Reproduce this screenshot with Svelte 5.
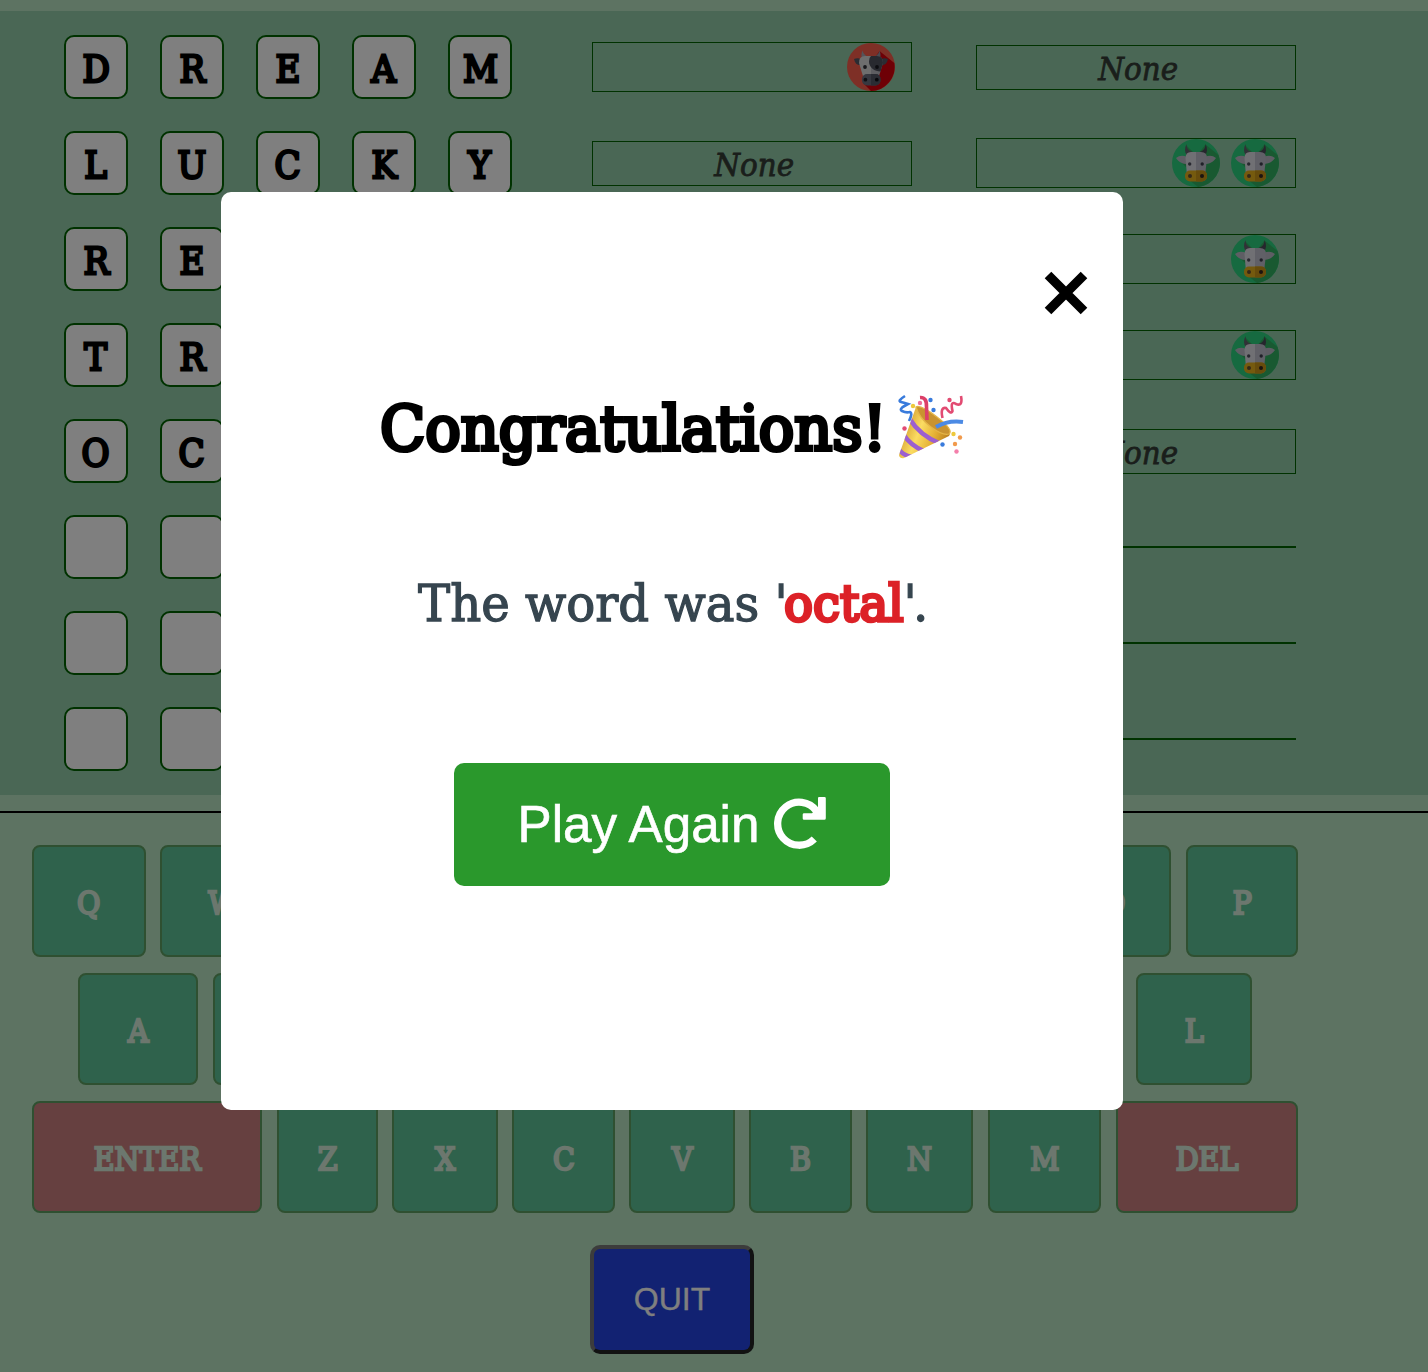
<script>
  const guesses = [
    { word: 'DREAM', bulls: 1, cows: 0 },
    { word: 'LUCKY', bulls: 0, cows: 2 },
    { word: 'RELAX', bulls: 1, cows: 1 },
    { word: 'TRAIL', bulls: 1, cows: 1 },
    { word: 'OCTAL', bulls: 5, cows: 0 },
    { word: '     ' },
    { word: '     ' },
    { word: '     ' }
  ];
  // A key without a width shares the space left over in its row.
  const key = (label, width, gap = 14.5) => ({ label, width, gap });
  const rows = [
    [key('Q', 114, 14), key('W', 125), ...[...'ERTYUI'].map((c) => key(c)), key('O', 114, 15), key('P', 112, 0)],
    [key('A', 120, 15), ...[...'SDFGHJK'].map((c) => key(c)), key('L', 116, 0)],
    [key('ENTER', 230, 15), key('Z', 101, 14), key('X', 106, 14), key('C', 103, 14), key('V', 106, 14),
     key('B', 103, 14), key('N', 107, 15), key('M', 113, 15), key('DEL', 182, 0)]
  ];
  const confetti = [
    [33, 26, '#eec93c'], [40, 23, '#ee6f9c'], [50.5, 20, '#397bdc'], [53.5, 30, '#397bdc'],
    [69.5, 20, '#e24b72'], [24.5, 48.5, '#e24b72'], [73.5, 54, '#eec93c'], [80, 57.5, '#f19a4c'],
    [75, 64, '#f19a4c'], [62.5, 64.5, '#397bdc'], [76.5, 71.5, '#f47fab']
  ];
</script>

{#snippet bull()}
  <svg class="animal" viewBox="0 0 48 48">
    <circle cx="24" cy="24" r="24" fill="#fc5e4c" />
    <path d="M32.500 8L47.300 20A24 24 0 0 1 24 48L16 40l8-20z" fill="#dc000c" />
    <path d="M15.500 7.500c-2 5-1 9 2 10l6-3c-4-1-7-3-8-7z" fill="#a8a8b4" />
    <path d="M32.500 7.500c2 5 1 9-2 10l-6-3c4-1 7-3 8-7z" fill="#9494a2" />
    <path d="M7 16c1 5 4 7 8 6v-5c-3-2-5-2-8-1zM41 16c-1 5-4 7-8 6v-5c3-2 5-2 8-1z" fill="#565866" />
    <path d="M18 13h6v26h-6l-3-9-3-10q0-7 6-7z" fill="#dcdcdc" />
    <path d="M24 13h6q6 0 6 7l-3 10-3 9h-6z" fill="#bcbcc4" />
    <path d="M24 13h6q6 0 6 7l-2.500 8.500c-6 0-11.500-4-11.500-10q0-4 2-5.500z" fill="#50525f" />
    <rect x="15" y="31" width="18.500" height="11.500" rx="5" fill="#6c7080" />
    <path d="M24 31h4.500q5 0 5 5.500t-5 6H24z" fill="#545866" />
    <circle cx="18" cy="24" r="1.900" fill="#303038" /><circle cx="30" cy="24" r="1.900" fill="#181820" />
    <circle cx="18.400" cy="36.700" r="1.900" fill="#202028" /><circle cx="29.800" cy="36.700" r="1.900" fill="#101018" />
  </svg>
{/snippet}

{#snippet cow()}
  <svg class="animal" viewBox="0 0 48 48">
    <circle cx="24" cy="24" r="24" fill="#2cd480" />
    <path d="M33.500 5.500L46.500 16A24 24 0 0 1 26 48L14.500 39l10-22z" fill="#32b262" />
    <path d="M14 6l7 7-7 5zM5 19l9 9 5-8z" fill="#32b262" />
    <path d="M14.500 5c-2 4-2 8 0 11l6-3c-4-1-6-4-6-8z" fill="#62626e" />
    <path d="M33.500 5c2 4 2 8 0 11l-6-3c4-1 6-4 6-8z" fill="#4c4c5a" />
    <path d="M4 19q5-4 11-1l1 7c-6 0-9-2-12-6zM44 19q-5-4-11-1l-1 7c6 0 9-2 12-6z" fill="#bcbcc8" />
    <path d="M19 13h5v24h-9l-1.500-18q0-6 5.500-6z" fill="#e0e0e8" />
    <path d="M24 13h5q6 0 6 6l-2 18h-9z" fill="#c0c0ce" />
    <rect x="13" y="31.500" width="22" height="11" rx="5" fill="#eab41c" />
    <path d="M24 31.500h6q5 0 5 5t-5 6h-6z" fill="#ce9818" />
    <circle cx="17.700" cy="25" r="1.700" fill="#505060" /><circle cx="30.200" cy="25" r="1.700" fill="#404050" />
    <circle cx="18" cy="37" r="2" fill="#685030" /><circle cx="30" cy="37" r="2" fill="#382820" />
  </svg>
{/snippet}

{#snippet result(count, icon)}
  {#if count === undefined}
    <div class="result blank"></div>
  {:else if count === 0}
    <div class="result none"><span>None</span></div>
  {:else}
    <div class="result icons">
      {#each Array(count) as _}{@render icon()}{/each}
    </div>
  {/if}
{/snippet}

<main>
  <section class="board">
    {#each guesses as guess}
      <div class="guess">
        <div class="tiles">
          {#each guess.word as letter}
            <div class="tile"><span>{letter}</span></div>
          {/each}
        </div>
        {@render result(guess.bulls, bull)}
        {@render result(guess.cows, cow)}
      </div>
    {/each}
  </section>

  <section class="keyboard">
    {#each rows as row, i}
      <div class="keys" class:inset={i === 1}>
        {#each row as k}
          <button
            class="key"
            class:action={k.label.length > 1}
            style:flex={k.width ? `0 0 ${k.width}px` : '1 1 0'}
            style:margin-right={`${k.gap}px`}
          ><span>{k.label}</span></button>
        {/each}
      </div>
    {/each}
  </section>
  <button class="quit">QUIT</button>
</main>

<div class="overlay">
  <div class="modal">
    <button class="close" aria-label="Close">
      <svg viewBox="0 0 44 44"><path d="M4 4l36 36M40 4L4 40" stroke="#000" stroke-width="9.300" /></svg>
    </button>
    <h1>
      <span class="title">Congratulations!</span>
      <svg class="party" viewBox="18 14 66 66">
        <defs>
          <linearGradient id="gold" x1="0" y1="0.300" x2="1" y2="0.700">
            <stop offset="0" stop-color="#c98d20" /><stop offset=".4" stop-color="#fbdc62" />
            <stop offset=".7" stop-color="#e3ae33" /><stop offset="1" stop-color="#b07318" />
          </linearGradient>
          <clipPath id="cone"><path d="M36 27L19 75Q20 79 24 78L69 56Q73 50 58 39T36 27z" /></clipPath>
        </defs>
        <path d="M36 27L19 75Q20 79 24 78L69 56Q73 50 58 39T36 27z" fill="url(#gold)" />
        <g clip-path="url(#cone)" fill="none" stroke="#9c5fd0" stroke-width="4.500">
          <path d="M29 38Q40 56 61 64" /><path d="M23 54Q31 66 44 71" /><path d="M18 68Q22 75 32 77" />
        </g>
        <path d="M36 27Q40 24 57 37T69 54Q63 56 51 47T36 27z" fill="#c99330" stroke="#e4b548" stroke-width="1.300" />
        <path d="M40 17.500Q47 17 46.500 27L47 40" fill="none" stroke="#dc3f68" stroke-width="3.600" />
        <path d="M56 47Q68 40 83 42" fill="none" stroke="#4c8ae4" stroke-width="4" />
        <path d="M25 16Q17 21 21 22T28 24Q18 29 22 31T30 32Q33 33 29 41" fill="none" stroke="#397bdc" stroke-width="2.600" />
        <path d="M62.500 38Q60 27 66 28Q71 35 72.500 31Q70 20 76 24Q83 27 81 16" fill="none" stroke="#e24b72" stroke-width="2.600" />
        {#each confetti as [x, y, fill]}
          <circle cx={x} cy={y} r="2.200" {fill} />
        {/each}
      </svg>
    </h1>
    <p><span class="message">The word was <i>'</i><b>octal</b><i>'</i>.</span></p>
    <button class="again">
      Play Again
      <svg viewBox="0 0 52 52">
        <path d="M40.300 42A21.500 21.500 0 1 1 42.500 14" fill="none" stroke="#fff" stroke-width="7.300" />
        <path d="M45 0h5.500q1.300 0 1.300 1.300v20q0 1.500-1.500 1.500H30q-1.300 0-1.300-1.300v-4q0-1.300 1.300-1.300h8l6-6V1.300Q44 0 45 0z" fill="#fff" />
      </svg>
    </button>
  </div>
</div>

<style>
  :global(body) { margin: 0; background: #bae6c5; overflow: hidden; }
  main {
    box-sizing: border-box; height: 1372px; padding-top: 11px; overflow: hidden;
    font-family: 'Roboto Slab', 'DejaVu Serif', serif;
  }
  button { box-sizing: border-box; margin: 0; padding: 0; font-family: inherit; }
  .board {
    box-sizing: border-box; height: 784px; padding: 24px 64px;
    display: flex; flex-direction: column; gap: 32px; background: #94ceaa;
  }
  .guess { display: flex; align-items: center; height: 64px; }
  .tiles { display: flex; gap: 32px; margin-right: 16px; }
  .tile {
    box-sizing: border-box; width: 64px; height: 64px; border: 2px solid #006400; border-radius: 10px;
    background: #fff; display: flex; align-items: center; justify-content: center;
    font-size: 38px; line-height: 60px;
  }
  /* An outline thickens the serifs into slabs. */
  .tile span { transform: scaleX(.9); padding-top: 4px; -webkit-text-stroke: 2.800px #000; }
  .result {
    box-sizing: border-box; flex: 0 0 320px; margin-left: 64px; border: 1px solid #006400;
    display: flex; align-items: center;
  }
  .icons { height: 50px; justify-content: flex-end; gap: 11px; padding-right: 16px; }
  .none {
    height: 45px; margin-top: 1px; justify-content: center; font-style: italic; font-size: 32px;
    line-height: 43px; color: #343c36;
  }
  .none span { transform: scaleX(.92); padding: 4px 0 0 4px; -webkit-text-stroke: .8px #343c36; }
  .animal { width: 48px; height: 48px; flex: none; }
  .keyboard {
    margin-top: 16px; border-top: 2px solid #000; padding: 32px 130px 0 32px;
    display: flex; flex-direction: column; gap: 16px;
  }
  .keys { display: flex; height: 112px; }
  .keys.inset { padding: 0 46px; }
  .key {
    height: 112px; border: 2px solid #5ea062; border-radius: 8px; background: #5ec498; color: #d8eedc;
    font-size: 31px;
  }
  .key span { display: inline-block; transform: scaleX(.92); padding-top: 4px; -webkit-text-stroke: 2.400px #d8eedc; }
  .action { background: #cc8080; }
  .quit {
    display: block; width: 164px; height: 109px; margin: 32px 0 0 590px; border: 4px solid;
    border-color: #787878 #242424 #242424 #787878; border-radius: 10px; background: #2444e4; color: #fff;
    font: 32px 'Liberation Sans', sans-serif; padding-bottom: 1px; -webkit-text-stroke: .3px #fff;
  }
  .overlay {
    position: fixed; inset: 0; box-sizing: border-box; padding: 192px 305px 262px 221px;
    background: rgba(0, 0, 0, .5);
  }
  .modal {
    box-sizing: border-box; height: 918px; background: #fff; border-radius: 10px;
    display: flex; flex-direction: column; align-items: center;
    font-family: 'Roboto Slab', 'DejaVu Serif', serif;
  }
  .close { align-self: flex-end; width: 44px; height: 44px; margin: 79px 35px 0 0; border: 0; background: none; }
  .modal svg { display: block; }
  h1 { display: flex; gap: 12px; margin: 79px 0 0; height: 80px; font-weight: 400; }
  .title {
    width: 506px; font-size: 62px; line-height: 70px; white-space: nowrap;
    transform: scaleX(.953); transform-origin: 0 0; -webkit-text-stroke: 4.200px #000;
  }
  .party { width: 66px; height: 66px; }
  p { margin: 97px 0 0; width: 510px; height: 71px; padding-left: 2px; }
  .message {
    display: inline-block; font-size: 51px; line-height: 66px; white-space: nowrap; color: #36454f;
    transform: scaleX(.945); transform-origin: 0 0; -webkit-text-stroke: 1.300px #36454f;
  }
  .message i { font-style: normal; letter-spacing: -4px; }
  .message b { font-weight: 400; color: #dc2127; -webkit-text-stroke: 3.400px #dc2127; }
  .again {
    width: 436px; height: 123px; margin-top: 121px; border: 0; border-radius: 10px; background: #2a982c;
    color: #fff; font: 51.200px 'Liberation Sans', sans-serif; display: flex; align-items: center;
    justify-content: center; gap: 15px; -webkit-text-stroke: .6px #fff;
  }
  .again svg { width: 52px; height: 52px; margin-bottom: 4px; }
</style>
